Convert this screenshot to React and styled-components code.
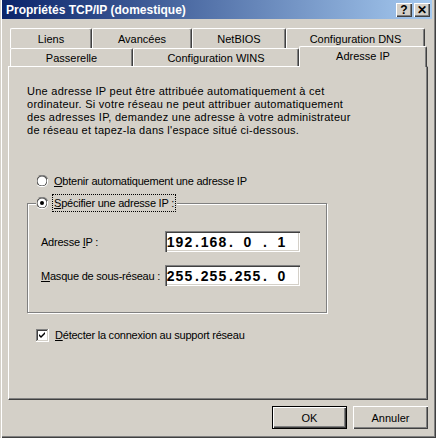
import React from 'react';
import styled, { createGlobalStyle } from 'styled-components';

const GlobalStyle = createGlobalStyle`
  body {
    margin: 0;
    background: #d4d0c8;
    font-family: "Liberation Sans", Arial, sans-serif;
    font-size: 11px;
    color: #000;
  }
`;

const Window = styled.div`
  box-sizing: border-box;
  width: 436px;
  height: 438px;
  display: flex;
  flex-direction: column;
  background: #d4d0c8;
  padding: 0 4px 2px 2px;
  box-shadow: inset 1px 0 #d4d0c8, inset 2px 0 #fff, inset -1px -1px #404040, inset -2px -2px #808080;
`;

const TitleBar = styled.div`
  height: 19px;
  display: flex;
  align-items: center;
  padding: 0 2px 0 4px;
  background: linear-gradient(90deg, #0a246a 0%, #a6caf0 100%);
  color: #fff;
  font-weight: 700;
  font-size: 12px;
`;

const TitleText = styled.span`
  flex: 1;
  white-space: nowrap;
`;

const TitleButton = styled.div`
  box-sizing: border-box;
  width: 16px;
  height: 14px;
  margin-left: 2px;
  background: #d4d0c8;
  color: #000;
  display: flex;
  align-items: center;
  justify-content: center;
  box-shadow: inset 1px 1px #fff, inset -1px -1px #404040, inset -2px -2px #808080;
  font-size: 12px;
  font-weight: 700;
`;

const Body = styled.div`
  flex: 1;
  display: flex;
  flex-direction: column;
  padding: 9px 0 0 6px;
`;

const TabRow = styled.div`
  display: flex;
  align-items: flex-end;
  padding-left: 2px;
  height: ${p => p.$h}px;
`;

const Tab = styled.div`
  box-sizing: border-box;
  width: ${p => p.$w}px;
  height: ${p => (p.$active ? 21 : p.$h)}px;
  margin-bottom: ${p => (p.$active ? -1 : 0)}px;
  position: relative;
  z-index: ${p => (p.$active ? 2 : 1)};
  display: flex;
  align-items: center;
  justify-content: center;
  padding-bottom: ${p => (p.$active ? 2 : 0)}px;
  background: #d4d0c8;
  border-top: 1px solid #fff;
  border-left: 1px solid #fff;
  border-right: 1px solid #404040;
  border-radius: 2px 2px 0 0;
  box-shadow: inset -1px 0 #808080;
  white-space: nowrap;
`;

const Panel = styled.div`
  box-sizing: border-box;
  width: 420px;
  height: 334px;
  display: flex;
  flex-direction: column;
  padding: 18px 0 0 18px;
  border-top: 1px solid #fff;
  border-left: 1px solid #fff;
  border-right: 1px solid #404040;
  border-bottom: 1px solid #404040;
  box-shadow: inset -1px -1px #808080;
`;

const Intro = styled.p`
  margin: 0;
  line-height: 13px;
  letter-spacing: 0.26px;
  white-space: nowrap;
`;

const OptionRow = styled.label`
  display: flex;
  align-items: center;
  height: 16px;
  margin: ${p => p.$m || '0'};
  padding-left: ${p => p.$pl || 0}px;
  gap: 5px;
`;

const Caption = styled.span`
  padding: 1px 1px;
  outline: ${p => (p.$focus ? '1px dotted #000' : 'none')};
  outline-offset: 0;
  line-height: 14px;
  letter-spacing: -0.22px;
`;

const Group = styled.fieldset`
  box-sizing: border-box;
  width: 300px;
  margin: 6px 0 0 0;
  padding: 20px 0 26px 13px;
  border: 1px solid #808080;
  box-shadow: 1px 1px 0 #fff, inset 1px 1px 0 #fff;
  display: flex;
  flex-direction: column;
  gap: 13px;
`;

const Legend = styled.legend`
  margin-left: -5px;
  padding: 0 2px 0 0;
  background: #d4d0c8;
`;

const FieldRow = styled.div`
  display: flex;
  align-items: center;
  height: 21px;
`;

const FieldLabel = styled.span`
  width: 124px;
  white-space: nowrap;
  letter-spacing: -0.22px;
`;

const IpBox = styled.div`
  box-sizing: border-box;
  width: 135px;
  height: 21px;
  display: flex;
  align-items: center;
  padding-left: 1px;
  background: #fff;
  box-shadow: inset 1px 1px #808080, inset 2px 2px #404040, inset -1px -1px #fff, inset -2px -2px #d4d0c8;
  font-weight: 700;
  font-size: 14px;
  letter-spacing: 1px;
`;

const Octet = styled.span`
  width: 28px;
  text-align: center;
`;

const Dot = styled.span`
  width: 6px;
  text-align: center;
  letter-spacing: 0;
`;

const Actions = styled.div`
  display: flex;
  justify-content: flex-end;
  gap: 6px;
  width: 420px;
  margin-top: 6px;
`;

const Button = styled.button`
  box-sizing: border-box;
  width: 75px;
  height: 23px;
  padding: 0;
  background: #d4d0c8;
  font-family: inherit;
  font-size: 11px;
  color: #000;
  border: ${p => (p.$default ? '1px solid #000' : 'none')};
  box-shadow: inset 1px 1px #fff, inset -1px -1px #404040, inset -2px -2px #808080;
`;

const U = styled.span`
  text-decoration: underline;
`;

const Radio = ({ checked }) => (
  <svg width="12" height="12" viewBox="0 0 12 12">
    <path d="M4 0h4l2 1 1 1 1 2v4h-1V4l-1-2-2-1H4L2 1 1 2 0 4V8L1 10 0 8V4l1-2 1-1z" fill="#808080" />
    <path d="M4 1h4l2 1 1 2v4l-1 2 -2 1H4l-2-1-1-2V4l1-2z" fill="#404040" />
    <path d="M8 12H4L2 11 1 10l1 0 2 1h4l2-1 1-2V4h1v4l-1 2-1 1z" fill="#fff" />
    <circle cx="6" cy="6" r="4.5" fill="#fff" />
    {checked && <circle cx="6" cy="6" r="2" fill="#000" />}
  </svg>
);

const Check = () => (
  <svg width="13" height="13" viewBox="0 0 13 13">
    <rect x="0" y="0" width="13" height="13" fill="#fff" />
    <path d="M0 0h12v1H1v11H0z" fill="#808080" />
    <path d="M1 1h10v1H2v9H1z" fill="#404040" />
    <path d="M12 0h1v13H0v-1h12z" fill="#fff" />
    <path d="M11 1h1v11H1v-1h10z" fill="#d4d0c8" />
    <path d="M3 5l2 2 4-4v2l-4 4-2-2z" fill="#000" />
  </svg>
);

const backTabs = [
  { label: 'Liens', w: 82 },
  { label: 'Avancées', w: 100 },
  { label: 'NetBIOS', w: 94 },
  { label: 'Configuration DNS', w: 139 },
];

const frontTabs = [
  { label: 'Passerelle', w: 123 },
  { label: 'Configuration WINS', w: 166 },
  { label: 'Adresse IP', w: 128, active: true },
];

const IpField = ({ parts }) => (
  <IpBox>
    {parts.map((p, i) => (
      <React.Fragment key={i}>
        <Octet>{p}</Octet>
        {i < 3 && <Dot>.</Dot>}
      </React.Fragment>
    ))}
  </IpBox>
);

export default function App() {
  return (
    <>
      <GlobalStyle />
      <Window>
        <TitleBar>
          <TitleText>Propriétés TCP/IP (domestique)</TitleText>
          <TitleButton>?</TitleButton>
          <TitleButton>✕</TitleButton>
        </TitleBar>
        <Body>
          <TabRow $h={20}>
            {backTabs.map(t => (
              <Tab key={t.label} $w={t.w} $h={20}>{t.label}</Tab>
            ))}
          </TabRow>
          <TabRow $h={18}>
            {frontTabs.map(t => (
              <Tab key={t.label} $w={t.w} $h={18} $active={t.active}>{t.label}</Tab>
            ))}
          </TabRow>
          <Panel>
            <Intro>
              Une adresse IP peut être attribuée automatiquement à cet<br />
              ordinateur. Si votre réseau ne peut attribuer automatiquement<br />
              des adresses IP, demandez une adresse à votre administrateur<br />
              de réseau et tapez-la dans l'espace situé ci-dessous.
            </Intro>
            <OptionRow $m="36px 0 0 0" $pl={9}>
              <Radio />
              <Caption><U>O</U>btenir automatiquement une adresse IP</Caption>
            </OptionRow>
            <Group>
              <Legend>
                <OptionRow>
                  <Radio checked />
                  <Caption $focus><U>S</U>pécifier une adresse IP :</Caption>
                </OptionRow>
              </Legend>
              <FieldRow>
                <FieldLabel>Adresse <U>I</U>P :</FieldLabel>
                <IpField parts={['192', '168', '0', '1']} />
              </FieldRow>
              <FieldRow>
                <FieldLabel><U>M</U>asque de sous-réseau :</FieldLabel>
                <IpField parts={['255', '255', '255', '0']} />
              </FieldRow>
            </Group>
            <OptionRow $m="14px 0 0 0" $pl={9}>
              <Check />
              <Caption><U>D</U>étecter la connexion au support réseau</Caption>
            </OptionRow>
          </Panel>
          <Actions>
            <Button $default>OK</Button>
            <Button>Annuler</Button>
          </Actions>
        </Body>
      </Window>
    </>
  );
}
